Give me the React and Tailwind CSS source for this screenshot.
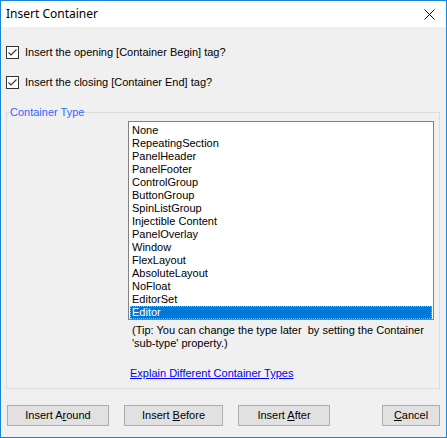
import React from 'react';

const types = [
  'None',
  'RepeatingSection',
  'PanelHeader',
  'PanelFooter',
  'ControlGroup',
  'ButtonGroup',
  'SpinListGroup',
  'Injectible Content',
  'PanelOverlay',
  'Window',
  'FlexLayout',
  'AbsoluteLayout',
  'NoFloat',
  'EditorSet',
  'Editor',
];

function CheckBox({ label, className }) {
  return (
    <label className={`flex items-center gap-[6px] h-[13px] ${className}`}>
      <span className="w-[13px] h-[13px] border border-[#333333] bg-white flex items-center justify-center">
        <svg width="11" height="11" viewBox="0 0 11 11">
          <path d="M1.5 5.5 L4 8 L9.5 2.5" fill="none" stroke="#333333" strokeWidth="1.1" />
        </svg>
      </span>
      <span className="leading-[13px]">{label}</span>
    </label>
  );
}

function Button({ children, className }) {
  return (
    <button className={`h-[21px] bg-[#e1e1e1] border border-[#adadad] text-black leading-[13px] ${className}`}>
      {children}
    </button>
  );
}

export default function App() {
  return (
    <div className="w-[447px] h-[438px] border border-[#1883d7] bg-[#f0f0f0] flex flex-col text-black text-[11px] font-['Liberation_Sans',sans-serif]">
      {/* Title bar */}
      <div className="h-[26px] bg-white flex items-center justify-between pl-[5px] pr-[11px] shrink-0">
        <span className="text-[12px] font-['Noto_Sans',sans-serif] leading-none">Insert Container</span>
        <svg width="11" height="11" viewBox="0 0 11 11">
          <path d="M0.5 0.5 L10.5 10.5 M10.5 0.5 L0.5 10.5" stroke="#000" strokeWidth="1" />
        </svg>
      </div>

      <div className="flex-1 flex flex-col pl-[5px]">
        <CheckBox className="mt-[19px]" label="Insert the opening [Container Begin] tag?" />
        <CheckBox className="mt-[17px]" label="Insert the closing [Container End] tag?" />

        {/* Container Type group */}
        <fieldset className="mt-[17px] w-[434px] h-[283px] border border-[#dcdcdc] px-[3px]">
          <legend className="text-[#3366ff] leading-[13px] px-0">Container Type</legend>
          <div className="ml-[118px] mt-[2px] w-[306px] h-[199px] border border-[#828282] bg-white pt-[2px] pl-[1px]">
            {types.map((t) => (
              <div
                key={t}
                className={`h-[13px] leading-[13px] pl-[2px] w-[302px] ${
                  t === 'Editor'
                    ? 'bg-[#0078d7] text-white outline outline-1 outline-dotted outline-[#ffffff80] -outline-offset-1'
                    : ''
                }`}
              >
                {t}
              </div>
            ))}
          </div>
          <p className="ml-[122px] mt-[4px] leading-[13px]">
            (Tip: You can change the type later&nbsp; by setting the Container
            <br />
            'sub-type' property.)
          </p>
          <a href="#" className="block ml-[120px] mt-[17px] leading-[13px] text-[#0000ff] underline w-fit">
            Explain Different Container Types
          </a>
        </fieldset>

        {/* Buttons */}
        <div className="flex items-center mt-[16px] ml-[1px]">
          <Button className="w-[102px]">
            Insert A<span className="underline">r</span>ound
          </Button>
          <Button className="w-[99px] ml-[15px]">
            Insert <span className="underline">B</span>efore
          </Button>
          <Button className="w-[92px] ml-[15px]">
            Insert <span className="underline">A</span>fter
          </Button>
          <Button className="w-[58px] ml-[52px]">
            <span className="underline">C</span>ancel
          </Button>
        </div>
      </div>
    </div>
  );
}
